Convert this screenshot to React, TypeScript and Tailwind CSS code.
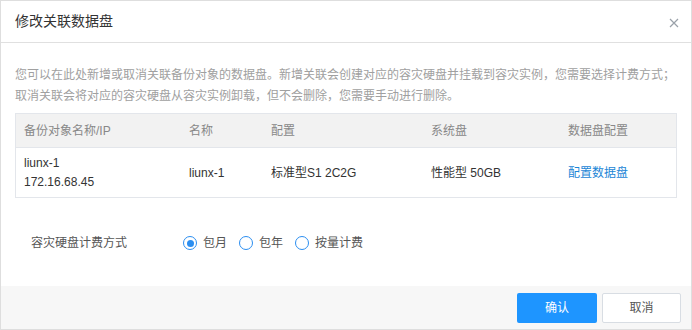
import React from "react";

function Radio({ checked, label }: { checked?: boolean; label: string }) {
  return (
    <label className="flex items-center gap-[6px]">
      <span className="w-[14px] h-[14px] rounded-full border border-[#2b8ef0] flex items-center justify-center bg-white">
        {checked && <span className="w-[7px] h-[7px] rounded-full bg-[#2b8ef0]" />}
      </span>
      <span className="text-[#555]">{label}</span>
    </label>
  );
}

export default function App() {
  return (
    <div
      className="w-[692px] h-[330px] border border-[#dedede] bg-white flex flex-col text-[12px] text-[#333]"
      style={{ fontFamily: '"Liberation Sans", "Noto Sans CJK SC", sans-serif' }}
    >
      <div className="h-[42px] shrink-0 border-b border-[#e0e0e0] flex items-center justify-between pl-[14px] pr-[12px]">
        <span className="text-[14px] text-[#333]">修改关联数据盘</span>
        <svg width="10" height="10" viewBox="0 0 10 10" className="mt-[3px]">
          <path d="M1 1 L9 9 M9 1 L1 9" stroke="#9aa1a9" strokeWidth="1.2" />
        </svg>
      </div>
      <div className="flex-1 px-[14px] pt-[22px]">
        <p className="text-[#a0a0a0] leading-[21px]">
          您可以在此处新增或取消关联备份对象的数据盘。新增关联会创建对应的容灾硬盘并挂载到容灾实例，您需要选择计费方式；
          <br />
          取消关联会将对应的容灾硬盘从容灾实例卸载，但不会删除，您需要手动进行删除。
        </p>
        <div className="mt-[6px] border border-[#e3e6eb]">
          <div className="h-[34px] bg-[#f2f2f2] border-b border-[#e3e6eb] grid grid-cols-[165px_82px_160px_137px_1fr] items-center pl-[8px] text-[#888]">
            <span>备份对象名称/IP</span>
            <span>名称</span>
            <span>配置</span>
            <span>系统盘</span>
            <span>数据盘配置</span>
          </div>
          <div className="h-[49px] grid grid-cols-[165px_82px_160px_137px_1fr] items-center pl-[8px] text-[#333]">
            <span className="leading-[19px]">
              liunx-1
              <br />
              172.16.68.45
            </span>
            <span>liunx-1</span>
            <span>标准型S1 2C2G</span>
            <span>性能型 50GB</span>
            <span className="text-[#1c86d6]">配置数据盘</span>
          </div>
        </div>
        <div className="mt-[36px] flex items-center pl-[16px]">
          <span className="w-[152px] text-[#555]">容灾硬盘计费方式</span>
          <div className="flex items-center gap-[12px]">
            <Radio checked label="包月" />
            <Radio label="包年" />
            <Radio label="按量计费" />
          </div>
        </div>
      </div>
      <div className="h-[43px] shrink-0 bg-[#f7f7f7] flex items-center justify-end gap-[5px] pr-[10px]">
        <button className="w-[80px] h-[30px] bg-[#1e95ff] text-white rounded-[2px]">确认</button>
        <button className="w-[79px] h-[30px] bg-white border border-[#d8dde3] text-[#555] rounded-[2px]">取消</button>
      </div>
    </div>
  );
}
